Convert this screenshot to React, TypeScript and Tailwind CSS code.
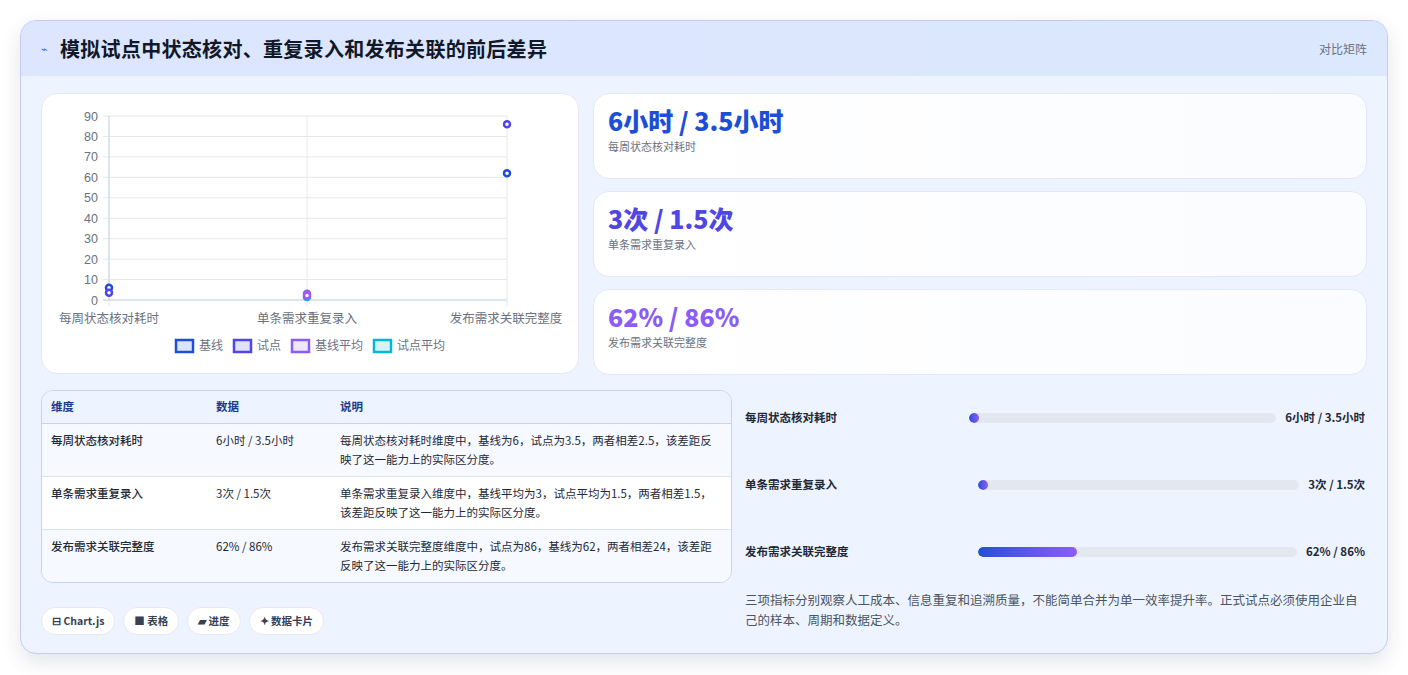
import React from 'react';

const font = { fontFamily: '"Noto Sans CJK SC", "Noto Sans", sans-serif' };

const stats = [
  { value: '6小时 / 3.5小时', label: '每周状态核对耗时', color: 'text-[#1d4ed8]' },
  { value: '3次 / 1.5次', label: '单条需求重复录入', color: 'text-[#4f46e5]' },
  { value: '62% / 86%', label: '发布需求关联完整度', color: 'text-[#8b5cf6]' },
];

const rows = [
  ['每周状态核对耗时', '6小时 / 3.5小时', '每周状态核对耗时维度中，基线为6，试点为3.5，两者相差2.5，该差距反映了这一能力上的实际区分度。'],
  ['单条需求重复录入', '3次 / 1.5次', '单条需求重复录入维度中，基线平均为3，试点平均为1.5，两者相差1.5，该差距反映了这一能力上的实际区分度。'],
  ['发布需求关联完整度', '62% / 86%', '发布需求关联完整度维度中，试点为86，基线为62，两者相差24，该差距反映了这一能力上的实际区分度。'],
];

const bars = [
  { label: '每周状态核对耗时', value: '6小时 / 3.5小时', pct: 3, lw: 'w-[224px]' },
  { label: '单条需求重复录入', value: '3次 / 1.5次', pct: 3, lw: 'w-[233px]' },
  { label: '发布需求关联完整度', value: '62% / 86%', pct: 31, lw: 'w-[233px]' },
];

function Chart() {
  const yv = (v: number) => 299 - v * 2.044;
  const ticks = [0, 10, 20, 30, 40, 50, 60, 70, 80, 90];
  const xs = [107, 305, 505];
  const pts = [
    { x: 107, v: 6, c: '#1d4ed8' },
    { x: 107, v: 3.5, c: '#4f46e5' },
    { x: 305, v: 3, c: '#8b5cf6' },
    { x: 305, v: 1.5, c: '#06b6d4' },
    { x: 305, v: 2.2, c: '#a855f7' },
    { x: 505, v: 62, c: '#1d4ed8' },
    { x: 505, v: 86, c: '#4f46e5' },
  ];
  const legend = [
    ['基线', '#1d4ed8', '#dbe4fb'],
    ['试点', '#4f46e5', '#e0e0fa'],
    ['基线平均', '#8b5cf6', '#efe7fd'],
    ['试点平均', '#06b6d4', '#d6f4f8'],
  ];
  return (
    <svg width="538" height="281" viewBox="40 93 538 281" className="block">
      {ticks.map((t) => (
        <g key={t}>
          <line x1="101" x2="505" y1={yv(t)} y2={yv(t)} stroke="#e5e7eb" />
          <text x="96" y={yv(t) + 4.5} textAnchor="end" fontSize="12.5" fill="#6b7280" fontFamily="Liberation Sans, sans-serif">{t}</text>
        </g>
      ))}
      {xs.map((x) => (
        <line key={x} x1={x} x2={x} y1={yv(90)} y2={305} stroke="#e5e7eb" />
      ))}
      <line x1="107" x2="107" y1={yv(90)} y2="299" stroke="#cbd5e1" />
      <line x1="101" x2="505" y1="299" y2="299" stroke="#cbd5e1" />
      {['每周状态核对耗时', '单条需求重复录入', '发布需求关联完整度'].map((l, i) => (
        <text key={l} x={i === 2 ? 504 : xs[i]} y="322" textAnchor="middle" fontSize="12.5" fill="#6b7280" style={font}>{l}</text>
      ))}
      {pts.map((p, i) => (
        <circle key={i} cx={p.x} cy={yv(p.v)} r="3" fill="#fff" stroke={p.c} strokeWidth="2.5" />
      ))}
      {legend.map(([l, c, bg], i) => {
        const x0 = [173, 231, 289, 371][i];
        return (
          <g key={l}>
            <rect x={x0 + 1} y="339" width="17" height="12" fill={bg} stroke={c} strokeWidth="2.5" />
            <text x={x0 + 24} y="349" fontSize="12" fill="#6b7280" style={font}>{l}</text>
          </g>
        );
      })}
    </svg>
  );
}

export default function App() {
  return (
    <div className="w-[1408px] h-[675px] bg-white p-5" style={font}>
      <div className="h-[634px] rounded-2xl border border-[#c3cdf0] bg-[#eef4ff] shadow-[0_8px_20px_rgba(30,41,80,0.12)] overflow-hidden flex flex-col">
        <div className="h-[55px] flex-none flex items-center justify-between px-5 bg-gradient-to-r from-[#dde5ff] to-[#dbe8fd]">
          <div className="flex items-center gap-3">
            <span className="text-[#3b63e0] text-[11px]">⌁</span>
            <h1 className="text-[20px] font-bold text-[#111827] tracking-[0.3px]">模拟试点中状态核对、重复录入和发布关联的前后差异</h1>
          </div>
          <span className="text-[12px] text-[#6b7280]">对比矩阵</span>
        </div>
        <div className="flex-1 px-5 pt-[17px] flex flex-col">
          <div className="flex gap-[14px]">
            <div className="w-[538px] h-[281px] rounded-2xl bg-white border border-[#e2e8f5]">
              <Chart />
            </div>
            <div className="flex-1 flex flex-col gap-[12px]">
              {stats.map((s) => (
                <div key={s.label} className="h-[86px] rounded-2xl bg-gradient-to-r from-white to-[#fbfcff] border border-[#e2e8f5] px-[14px] pt-[9px]">
                  <div className={`text-[25px] font-extrabold leading-[34px] ${s.color}`}>{s.value}</div>
                  <div className="text-[11px] text-[#6b7280] mt-[1px]">{s.label}</div>
                </div>
              ))}
            </div>
          </div>
          <div className="flex gap-[13px] mt-[15px]">
            <div className="w-[691px] flex flex-col">
              <div className="rounded-xl border border-[#c9d3e6] overflow-hidden text-[11.5px]">
                <div className="flex h-[33px] items-center bg-[#eef4ff] border-b border-[#c9d3e6] text-[#1e3a8a] font-bold">
                  <div className="w-[174px] pl-[9px]">维度</div>
                  <div className="w-[124px]">数据</div>
                  <div className="flex-1">说明</div>
                </div>
                {rows.map((r, i) => (
                  <div key={i} className={`flex py-[7px] text-[#1f2937] leading-[19px] ${i === 1 ? 'bg-white' : 'bg-[#f6f9ff]'} ${i < 2 ? 'border-b border-[#dde3ef]' : ''}`}>
                    <div className="w-[174px] pl-[9px] font-medium">{r[0]}</div>
                    <div className="w-[124px]">{r[1]}</div>
                    <div className="flex-1 pr-[10px]">{r[2]}</div>
                  </div>
                ))}
              </div>
              <div className="flex gap-2 mt-[24px]">
                {['⊟ Chart.js', '■ 表格', '▰ 进度', '✦ 数据卡片'].map((c) => (
                  <span key={c} className="h-[28px] px-[10px] flex items-center rounded-full bg-white border border-[#e5e9f2] text-[10.5px] font-bold text-[#374151]">{c}</span>
                ))}
              </div>
            </div>
            <div className="flex-1 flex flex-col">
              <div className="flex flex-col gap-[47px] pt-[18px]">
                {bars.map((b) => (
                  <div key={b.label} className="flex items-center h-[20px] text-[11.5px] font-bold text-[#1f2937]">
                    <div className={`${b.lw} flex-none`}>{b.label}</div>
                    <div className="flex-1 h-[10px] rounded-full bg-[#e3e7ef] overflow-hidden">
                      <div className="h-full rounded-full bg-gradient-to-r from-[#1d4ed8] to-[#8b5cf6]" style={{ width: `${b.pct}%`, minWidth: 10 }} />
                    </div>
                    <div className="flex-none pl-[9px] pr-[2px]">{b.value}</div>
                  </div>
                ))}
              </div>
              <p className="mt-[28px] text-[12.5px] leading-[20px] text-[#4b5563]">三项指标分别观察人工成本、信息重复和追溯质量，不能简单合并为单一效率提升率。正式试点必须使用企业自己的样本、周期和数据定义。</p>
            </div>
          </div>
        </div>
      </div>
    </div>
  );
}
